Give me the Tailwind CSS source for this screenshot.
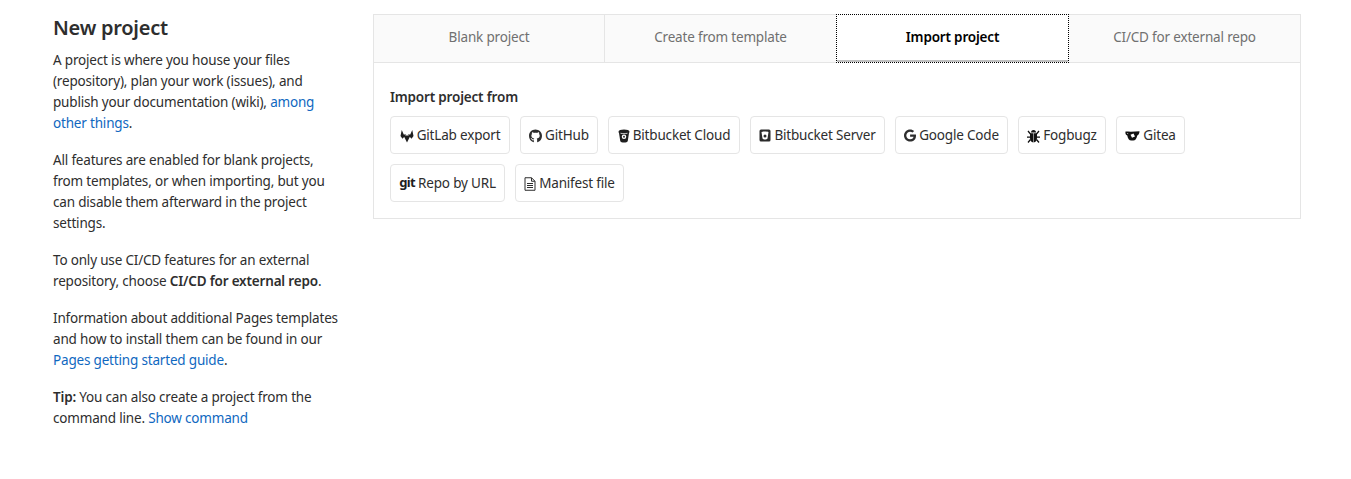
<!DOCTYPE html>
<html lang="en">
<head>
  <meta charset="UTF-8" />
  <title>New project</title>
  <script src="https://cdn.jsdelivr.net/npm/@tailwindcss/browser@4"></script>
</head>
<body class="bg-white text-[#2e2e2e] font-['Noto_Sans',sans-serif] text-[13.5px] tracking-[-0.18px] leading-[21px]">
  <div class="flex pl-[53px] pr-[50px] pt-[14px] h-[479px] overflow-hidden">

    <!-- Left column -->
    <div class="w-[290px] shrink-0 mr-[30px]">
      <h1 class="text-[20px] tracking-[-0.25px] leading-[28px] font-semibold mb-[8px]">New project</h1>
      <p class="mb-[16px]">A project is where you house your files (repository), plan your work (issues), and publish your documentation (wiki), <a class="text-[#1068bf]">among other things</a>.</p>
      <p class="mb-[16px]">All features are enabled for blank projects, from templates, or when importing, but you can disable them afterward in the project settings.</p>
      <p class="mb-[16px]">To only use CI/CD features for an external repository, choose <strong class="font-semibold">CI/CD for external repo</strong>.</p>
      <p class="mb-[16px]">Information about additional Pages templates and how to install them can be found in our <a class="text-[#1068bf]">Pages getting started guide</a>.</p>
      <p><strong class="font-semibold">Tip:</strong> You can also create a project from the command line. <a class="text-[#1068bf]">Show command</a></p>
    </div>

    <!-- Right column -->
    <div class="flex-1">
      <div class="border border-[#e5e5e5] h-[205px]">
        <div class="flex h-[48px] border-b border-[#e5e5e5] bg-[#fafafa] text-[#707070]">
          <div class="w-[231px] pb-[2px] flex items-center justify-center border-r border-[#e5e5e5]">Blank project</div>
          <div class="w-[231px] pb-[2px] flex items-center justify-center">Create from template</div>
          <div class="w-[233px] h-[49px] -mt-px pb-[3px] flex items-center justify-center bg-white text-black font-semibold border border-dotted border-black shadow-[inset_0_-2px_0_#bfbfbf]">Import project</div>
          <div class="flex-1 pb-[2px] flex items-center justify-center">CI/CD for external repo</div>
        </div>
        <div class="px-[16px] pt-[24px]">
          <div class="font-semibold mb-[8px]">Import project from</div>
          <div class="flex flex-wrap gap-[10px]">
            <a class="w-[120px] flex items-center justify-center gap-[3px] h-[38px] pt-[1px] border border-[#e5e5e5] rounded-[4px]">
              <svg class="w-[14px] h-[14px]" viewBox="0 0 28 28" fill="#1f1f1f"><path d="M3.500 2 7.500 11h5L5 19.500 1 14z"/><path d="M24.500 2 20.500 11h-5L23 19.500 27 14z"/><path d="M7 13h14l-7 14z"/></svg>
              GitLab export
            </a>
            <a class="w-[78px] flex items-center justify-center gap-[3px] h-[38px] pt-[1px] border border-[#e5e5e5] rounded-[4px]">
              <svg class="w-[13px] h-[14px]" viewBox="0 0 496 512" fill="#2e2e2e"><path d="M244.800 8C106.100 8 0 113.300 0 252c0 110.900 69.800 205.800 169.500 239.200 12.800 2.300 17.300-5.600 17.300-12.100 0-6.200-.3-40.400-.3-61.400 0 0-70 15-84.700-29.800 0 0-11.400-29.100-27.800-36.600 0 0-22.900-15.700 1.600-15.400 0 0 24.900 2 38.600 25.800 21.900 38.600 58.600 27.500 72.900 20.900 2.300-16 8.800-27.100 16-33.700-55.900-6.200-112.300-14.300-112.300-110.500 0-27.500 7.600-41.300 23.600-58.900-2.600-6.500-11.100-33.300 2.600-67.900 20.900-6.500 69 27 69 27 20-5.600 41.500-8.500 62.800-8.500s42.800 2.900 62.800 8.500c0 0 48.100-33.600 69-27 13.700 34.700 5.200 61.400 2.600 67.900 16 17.700 25.800 31.500 25.800 58.900 0 96.500-58.900 104.200-114.800 110.500 9.200 7.900 17 22.900 17 46.400 0 33.700-.3 75.400-.3 83.600 0 6.500 4.600 14.400 17.300 12.100C428.200 457.800 496 362.900 496 252 496 113.300 383.500 8 244.800 8z"/></svg>
              GitHub
            </a>
            <a class="w-[132px] flex items-center justify-center gap-[3px] h-[38px] pt-[1px] border border-[#e5e5e5] rounded-[4px]">
              <svg class="w-[12px] h-[14px]" viewBox="0 0 24 28" fill="#1f1f1f"><path fill-rule="evenodd" d="M12 1c6 0 11 1.500 11 4.500 0 1-.5 1.500-1 2.500l-2.500 16c-.5 2-4 3-7.500 3s-7-1-7.500-3L2 8C1.500 7 1 6.500 1 5.500 1 2.500 6 1 12 1zM12 11a4.500 4.500 0 1 0 0 9 4.500 4.500 0 0 0 0-9z"/><circle cx="12" cy="15.500" r="1.800"/><path d="M5 8.500c4 1 10 1 14 0" stroke="#fff" stroke-width="1.500" fill="none"/></svg>
              Bitbucket Cloud
            </a>
            <a class="w-[135px] flex items-center justify-center gap-[3px] h-[38px] pt-[1px] border border-[#e5e5e5] rounded-[4px]">
              <svg class="w-[12px] h-[13px]" viewBox="0 0 24 26" fill="#2a2a2a"><path fill-rule="evenodd" d="M4 1h16a3 3 0 0 1 3 3v18a3 3 0 0 1-3 3H4a3 3 0 0 1-3-3V4a3 3 0 0 1 3-3zm1 5 2 13c2 2.500 8 2.500 10 0l2-13c-3-1.500-11-1.500-14 0z"/><circle cx="12" cy="14" r="3"/></svg>
              Bitbucket Server
            </a>
            <a class="w-[113px] flex items-center justify-center gap-[3px] h-[38px] pt-[1px] border border-[#e5e5e5] rounded-[4px]">
              <svg class="w-[12px] h-[13px]" viewBox="0 0 488 512" fill="#2e2e2e"><path d="M488 261.800C488 403.300 391.100 504 248 504 110.800 504 0 393.200 0 256S110.800 8 248 8c66.800 0 123 24.500 166.300 64.900l-67.500 64.900C258.500 52.600 94.300 116.600 94.300 256c0 86.500 69.100 156.600 153.700 156.600 98.200 0 135-70.400 140.800-106.900H248v-85.300h236.100c2.300 12.700 3.900 24.900 3.900 41.400z"/></svg>
              Google Code
            </a>
            <a class="w-[88px] flex items-center justify-center gap-[3px] h-[38px] pt-[1px] border border-[#e5e5e5] rounded-[4px]">
              <svg class="w-[13px] h-[14px]" viewBox="0 0 26 28" fill="#111"><path d="M8 7a5 5 0 0 1 10 0z"/><path d="M6 8.500h6.500V27C9 26.700 6 23 6 18zM13.500 8.500H20V18c0 5-3 8.700-6.500 9z"/><path d="M2 4l5 6M24 4l-5 6M0 16h6M26 16h-6M2 27l5-6M24 27l-5-6" stroke="#111" stroke-width="2.500" fill="none"/></svg>
              Fogbugz
            </a>
            <a class="w-[69px] flex items-center justify-center gap-[3px] h-[38px] pt-[1px] border border-[#e5e5e5] rounded-[4px]">
              <svg class="w-[15px] h-[12px]" viewBox="0 0 30 24" fill="#111"><path fill-rule="evenodd" d="M1 3c8 .5 18 .5 28-.5 0 4-2 8-4.500 8.500-1 6-4 10-8 10h-4c-4 0-7-4-8-10C2 10.500 0 7 1 3zm3.500 3c0 1.500 1 2.300 2 2.500L6 6zm12.500 1-6 2.500 3 6 6-2.500z"/></svg>
              Gitea
            </a>
            <a class="w-[115px] flex items-center justify-center gap-[3px] h-[38px] pt-[1px] border border-[#e5e5e5] rounded-[4px]">
              <span class="font-bold text-[13px] tracking-[-0.6px] text-[#1f1f1f] -mt-[3px]">git</span>
              Repo by URL
            </a>
            <a class="w-[109px] flex items-center justify-center gap-[3px] h-[38px] pt-[1px] border border-[#e5e5e5] rounded-[4px]">
              <svg class="w-[12px] h-[14px]" viewBox="0 0 24 28" fill="none" stroke="#2e2e2e" stroke-width="2"><path d="M2 1.500h13l7 7v18H2zM15 1.500v7h7M6 13h12M6 17h12M6 21h12"/></svg>
              Manifest file
            </a>
          </div>
        </div>
      </div>
    </div>
  </div>
</body>
</html>
